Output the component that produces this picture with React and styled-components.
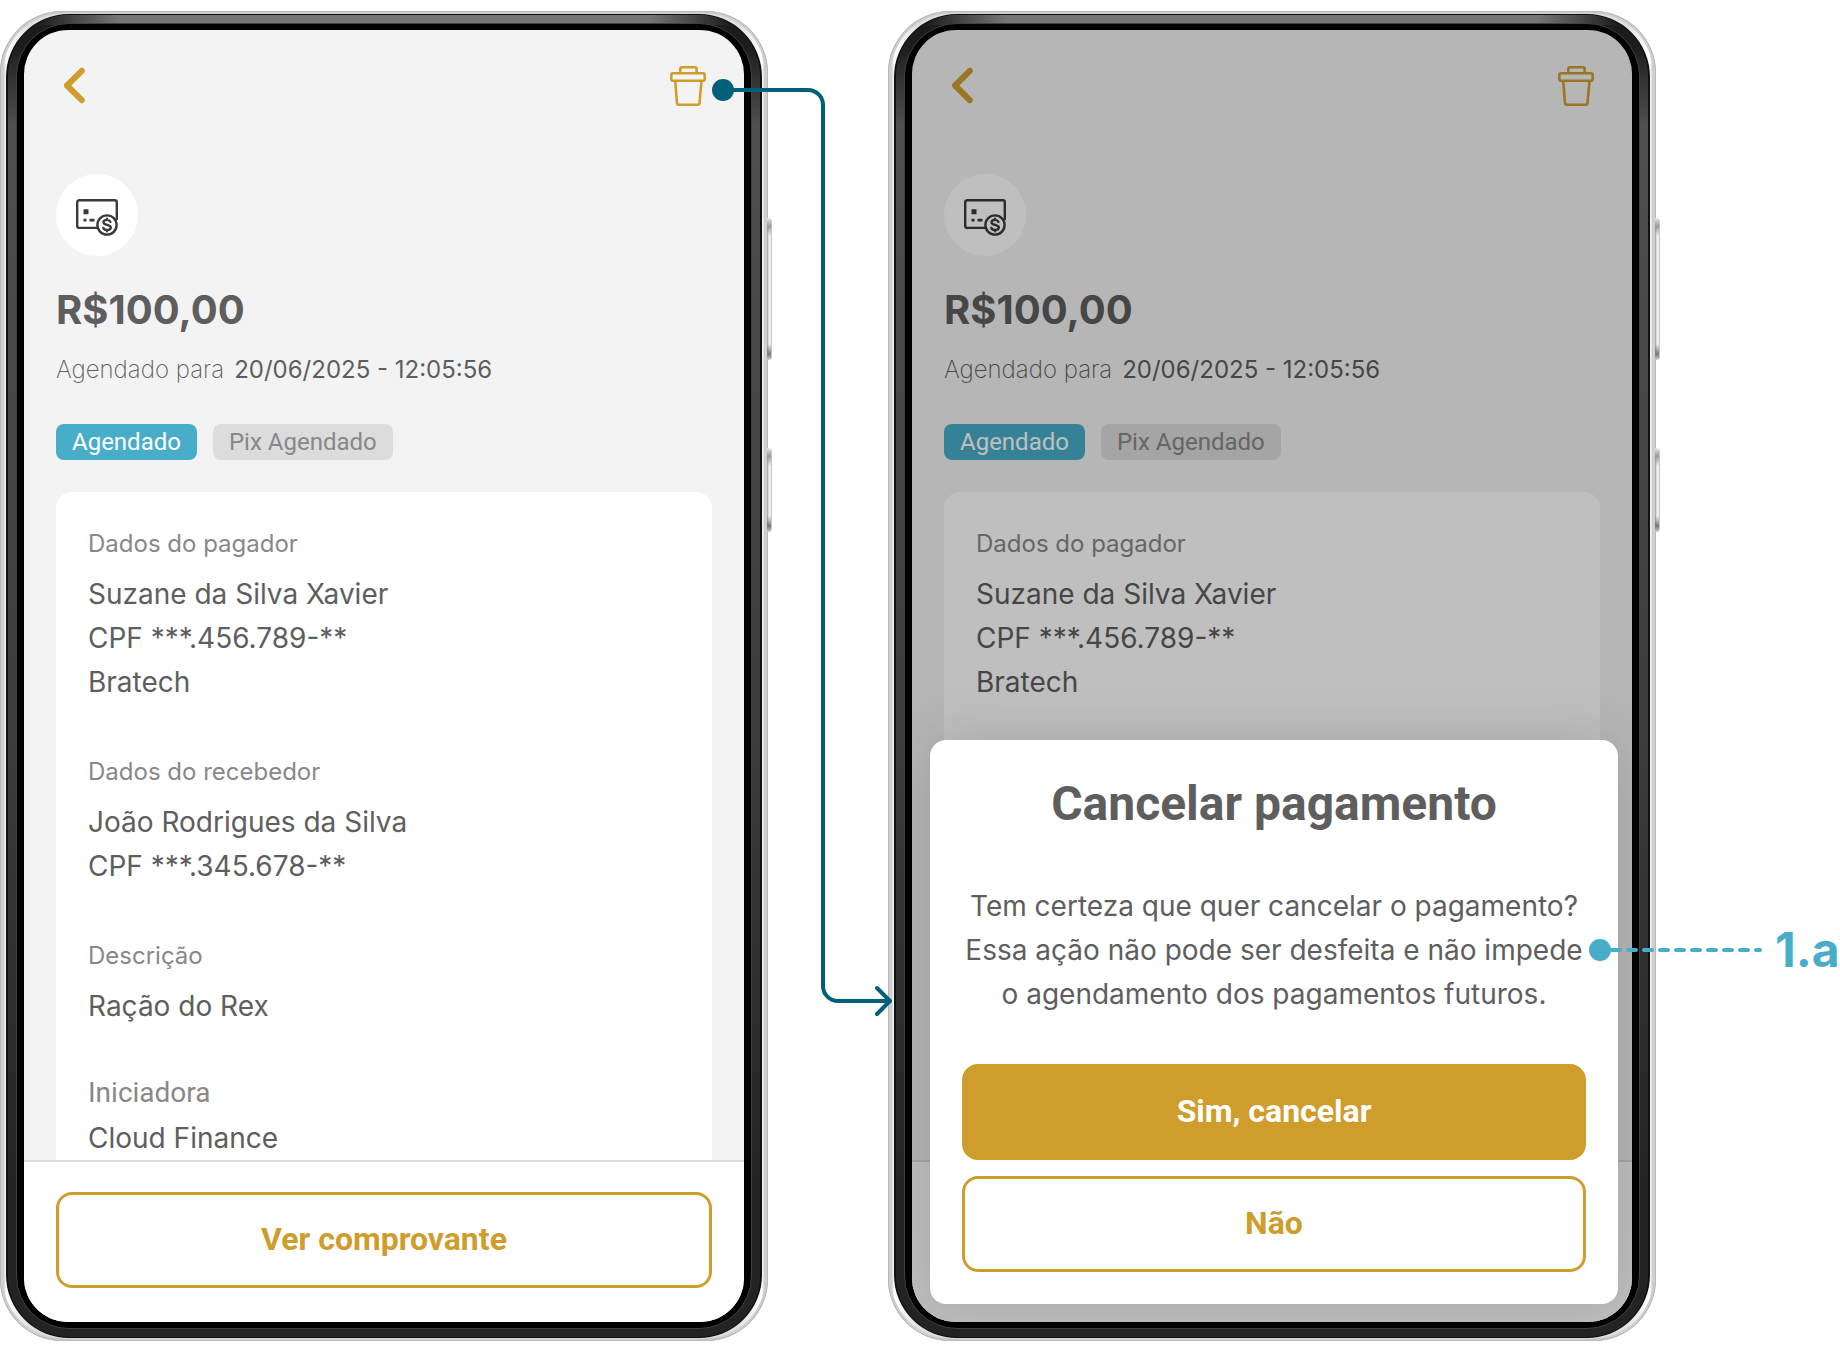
import React from "react";
import styled, { createGlobalStyle } from "styled-components";

const GOLD = "#cf9d2c";
const TEXT = "#5e5e5e";
const MUTED = "#888";
const SKY = "#47adc9";
const PETROL = "#00607a";

const GlobalStyle = createGlobalStyle`
  *, *::before, *::after { box-sizing: border-box; }
  body {
    margin: 0;
    background: #fff;
    color: ${TEXT};
    font-family: Inter, "Liberation Sans", sans-serif;
    -webkit-font-smoothing: antialiased;
  }
  h1, h2, p, dl, dd { margin: 0; }
  button { font: inherit; cursor: pointer; }
`;

const Board = styled.main`
  position: relative;
  display: flex;
  align-items: flex-start;
  gap: 120px;
  padding-top: 11px;
  overflow: hidden;
`;

const Chassis = styled.section`
  position: relative;
  flex: 0 0 768px;
  padding: 3px 6px;
  border-radius: 62px;
  background: linear-gradient(90deg, #b4b4b4, #d4d4d4 4px, #fff 6px, #e0e0e0 30px, #e0e0e0 738px, #fff 762px, #c6c6c6 765px);
  box-shadow: inset 0 0 0 1px #b8b8b8, inset 0 0 0 3px #cfcfcf;
`;

const Bezel = styled.div`
  padding: 1px 2px;
  border-radius: 63px;
  background: #111;
`;

const Band = styled.div`
  padding: 8px;
  border-radius: 61px;
  background:
    linear-gradient(90deg, #1c1c1c 30px, #767676 110px, #767676 calc(100% - 110px), #1c1c1c calc(100% - 30px)) top / 100% 10px no-repeat,
    linear-gradient(#1c1c1c 30px, #4f4f4f 110px, #3c3c3c 55%, #232323 90%);
`;

const Rim = styled.div`
  padding: 6px 7px;
  border: 1px solid #404040;
  border-radius: 53px;
  background: #000;
`;

const Screen = styled.div`
  position: relative;
  display: flex;
  flex-direction: column;
  height: 1292px;
  border-radius: 44px;
  overflow: hidden;
  background: #f3f3f3;
`;

const SideButton = styled.span`
  position: absolute;
  left: calc(100% - 1px);
  top: ${({ $top }) => $top}px;
  width: 5px;
  height: ${({ $height }) => $height}px;
  border-radius: 0 4px 4px 0;
  background:
    linear-gradient(#e8e8e8, #999 8px, transparent 18px, transparent calc(100% - 16px), #777 calc(100% - 6px), #ccc) left / 4px 100% no-repeat,
    linear-gradient(90deg, #999, #eee 2px, #fff 3px, #b5b5b5);
`;

const Nav = styled.nav`
  display: flex;
  justify-content: space-between;
  padding: 36px 38px 0 40px;
`;

const IconButton = styled.button`
  display: flex;
  padding: 0;
  border: 0;
  background: none;
  color: ${GOLD};
`;

const Summary = styled.header`
  display: flex;
  flex-direction: column;
  align-items: flex-start;
  padding: 68px 32px 32px;
`;

const Avatar = styled.div`
  display: flex;
  align-items: center;
  justify-content: center;
  width: 82px;
  height: 82px;
  padding-top: 5px;
  border-radius: 50%;
  background: #fff;
  color: #3a3a3a;
`;

const Amount = styled.h1`
  margin-top: 28px;
  font-size: 40px;
  line-height: 52px;
  font-weight: 700;
`;

const Schedule = styled.p`
  display: flex;
  gap: 10px;
  margin-top: 18px;
  font-size: 24px;
  line-height: 32px;
  font-weight: 200;
`;

const Moment = styled.time`
  font-weight: 400;
`;

const Tags = styled.div`
  display: flex;
  gap: 16px;
  margin-top: 38px;
`;

const Tag = styled.span`
  padding: 0 16px;
  border-radius: 8px;
  background: ${({ $active }) => ($active ? SKY : "#dcdcdc")};
  color: ${({ $active }) => ($active ? "#fff" : MUTED)};
  font-family: Roboto, "Liberation Sans", sans-serif;
  font-size: 24px;
  line-height: 36px;
`;

const Card = styled.dl`
  flex: 1;
  min-height: 0;
  margin: 0 32px;
  padding: 36px 32px 0;
  border-radius: 16px 16px 0 0;
  background: #fff;
  overflow: hidden;
`;

const Group = styled.div`
  padding-bottom: ${({ $last }) => ($last ? 0 : 52)}px;
`;

const Label = styled.dt`
  margin-bottom: 12px;
  color: ${MUTED};
  font-size: 24px;
  line-height: 32px;
  font-weight: 400;
`;

const LargeLabel = styled(Label)`
  margin-bottom: 10px;
  font-family: Roboto, "Liberation Sans", sans-serif;
  font-size: 28px;
  line-height: 26px;
`;

const Value = styled.dd`
  font-size: 28px;
  line-height: 44px;
  font-weight: 400;
`;

const Footer = styled.footer`
  padding: 30px 32px 34px;
  border-top: 2px solid #dcdcdc;
  background: #fff;
`;

const Action = styled.button`
  display: block;
  width: 100%;
  height: 96px;
  padding: 0 0 2px;
  border: 3px solid ${GOLD};
  border-radius: 16px;
  background: ${({ $solid }) => ($solid ? GOLD : "#fff")};
  color: ${({ $solid }) => ($solid ? "#fff" : GOLD)};
  && { font-family: Roboto, "Liberation Sans", sans-serif; font-size: 32px; font-weight: 700; }
`;

const Scrim = styled.div`
  position: absolute;
  inset: 0;
  display: flex;
  flex-direction: column;
  justify-content: flex-end;
  padding: 18px 14px 18px 18px;
  background: rgba(0, 0, 0, 0.25);
`;

const Dialog = styled.div`
  display: flex;
  flex-direction: column;
  gap: 16px;
  padding: 32px;
  border-radius: 16px;
  background: #fff;
  box-shadow: 0 0 60px rgba(0, 0, 0, 0.14);
`;

const DialogTitle = styled.h2`
  font-family: Roboto, "Liberation Sans", sans-serif;
  font-size: 48px;
  line-height: 64px;
  font-weight: 700;
  text-align: center;
`;

const DialogText = styled.p`
  margin: 32px 0;
  font-size: 28px;
  line-height: 44px;
  font-weight: 400;
  text-align: center;
`;

const Flow = styled.svg`
  position: absolute;
  left: 710px;
  top: 76px;
`;

const Callout = styled.div`
  position: absolute;
  left: 1589px;
  top: 922px;
  display: flex;
  align-items: center;
  gap: 12px;
  color: ${SKY};
  font-size: 48px;
  line-height: 56px;
  font-weight: 700;
`;

function BackIcon() {
  return (
    <svg width="36" height="40" viewBox="0 0 36 40" fill="none" stroke="currentColor" strokeWidth="6" strokeLinecap="round" strokeLinejoin="round" aria-hidden="true">
      <path d="M17.800 4.800 3 19.500 17.800 34.200" />
    </svg>
  );
}

function TrashIcon() {
  return (
    <svg width="36" height="40" viewBox="0 0 36 40" fill="none" stroke="currentColor" strokeWidth="2.600" strokeLinejoin="round" aria-hidden="true">
      <rect x="1.300" y="7.200" width="33.400" height="7.600" rx="1.800" />
      <path d="M10.300 7.200V3.100a1.800 1.800 0 0 1 1.800-1.800H24.800a1.800 1.800 0 0 1 1.800 1.800v4.100M5.200 14.800 7 37.100a1.800 1.800 0 0 0 1.800 1.600h18.900a1.800 1.800 0 0 0 1.800-1.600l2-22.300" />
    </svg>
  );
}

function TransferIcon() {
  return (
    <svg width="42" height="37" viewBox="0 0 42 37" fill="none" stroke="currentColor" strokeWidth="2.400" strokeLinecap="round" strokeLinejoin="round" aria-hidden="true">
      <path d="M20.500 28.900H3.200a2 2 0 0 1-2-2V3.200a2 2 0 0 1 2-2h35.600a2 2 0 0 1 2 2V20" />
      <circle cx="31" cy="26" r="9.600" />
      <path d="M34.400 22.800c-.6-1.300-1.700-1.900-3.400-1.900-2.100 0-3.500.9-3.500 2.400 0 3.500 7.300 1.700 7.300 5.300 0 1.600-1.500 2.500-3.700 2.500-2 0-3.300-.8-3.800-2.200M31 19.800v1.100M31 31v1.300" />
      <path d="M7.500 10.300h5v5h-5zM7.500 19.800h3v2.600h-3zM13.500 19.800h5v2.600h-5z" fill="currentColor" stroke="none" />
    </svg>
  );
}

const GROUPS = [
  { label: "Dados do pagador", values: ["Suzane da Silva Xavier", "CPF ***.456.789-**", "Bratech"] },
  { label: "Dados do recebedor", values: ["João Rodrigues da Silva", "CPF ***.345.678-**"] },
  { label: "Descrição", values: ["Ração do Rex"] },
  { label: "Iniciadora", values: ["Cloud Finance"], large: true },
];

function Details({ label, values, large, last }) {
  const Term = large ? LargeLabel : Label;
  return (
    <Group $last={last}>
      <Term>{label}</Term>
      {values.map((value) => <Value key={value}>{value}</Value>)}
    </Group>
  );
}

function Phone({ label, children }) {
  return (
    <Chassis aria-label={label}>
      <SideButton $top={207} $height={142} />
      <SideButton $top={437} $height={84} />
      <Bezel>
        <Band>
          <Rim>
            <Screen>
              <Nav>
                <IconButton type="button" aria-label="Voltar"><BackIcon /></IconButton>
                <IconButton type="button" aria-label="Excluir"><TrashIcon /></IconButton>
              </Nav>
              <Summary>
                <Avatar><TransferIcon /></Avatar>
                <Amount>R$100,00</Amount>
                <Schedule>Agendado para <Moment>20/06/2025 - 12:05:56</Moment></Schedule>
                <Tags>
                  <Tag $active>Agendado</Tag>
                  <Tag>Pix Agendado</Tag>
                </Tags>
              </Summary>
              <Card>
                {GROUPS.map((group, index) => (
                  <Details key={group.label} {...group} last={index === GROUPS.length - 1} />
                ))}
              </Card>
              <Footer><Action type="button">Ver comprovante</Action></Footer>
              {children}
            </Screen>
          </Rim>
        </Band>
      </Bezel>
    </Chassis>
  );
}

export default function App() {
  return (
    <>
      <GlobalStyle />
      <Board>
        <Phone label="Detalhe do agendamento" />
        <Phone label="Confirmação de cancelamento">
          <Scrim>
            <Dialog role="dialog" aria-labelledby="cancel-title">
              <DialogTitle id="cancel-title">Cancelar pagamento</DialogTitle>
              <DialogText>
                Tem certeza que quer cancelar o pagamento? Essa ação não pode ser desfeita e não impede o agendamento dos pagamentos futuros.
              </DialogText>
              <Action type="button" $solid>Sim, cancelar</Action>
              <Action type="button">Não</Action>
            </Dialog>
          </Scrim>
        </Phone>
        <Flow width="186" height="944" viewBox="710 76 186 944" fill="none" stroke={PETROL} strokeWidth="4" strokeLinecap="round" strokeLinejoin="round" aria-hidden="true">
          <circle cx="723" cy="90" r="11" fill={PETROL} stroke="none" />
          <path d="M723 90h85a15 15 0 0 1 15 15v881a15 15 0 0 0 15 15h52M877 988l13 13-13 13" />
        </Flow>
        <Callout>
          <svg width="174" height="22" viewBox="0 0 174 22" fill="none" stroke="currentColor" strokeWidth="4" strokeLinecap="round" aria-hidden="true">
            <circle cx="11" cy="11" r="11" fill="currentColor" stroke="none" />
            <path d="M23 11h148" strokeDasharray="8 8" />
          </svg>
          1.a
        </Callout>
      </Board>
    </>
  );
}
